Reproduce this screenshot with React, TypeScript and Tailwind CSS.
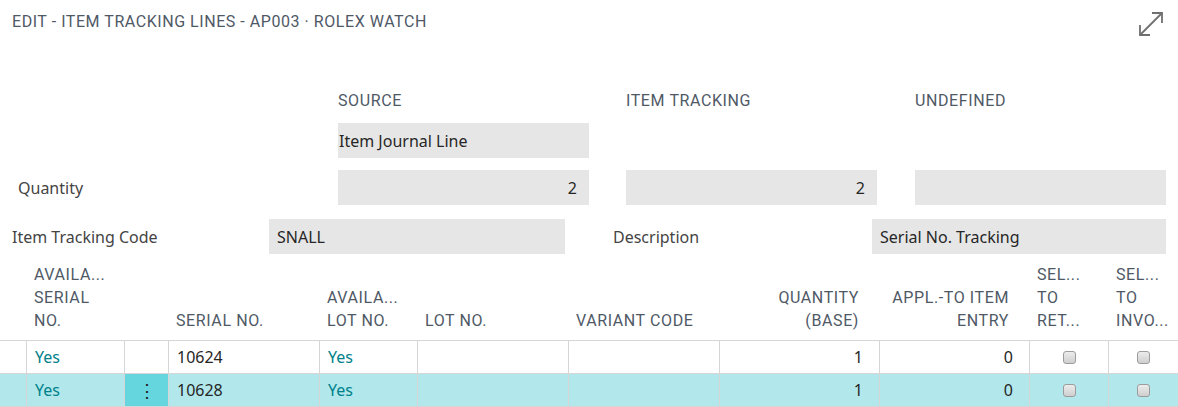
import React from 'react';

const cols = '26px 98px 44px 151px 98px 151px 151px 160px 150px 79px 70px';

const ExpandIcon = () => (
  <svg width="30" height="30" viewBox="0 0 30 30" fill="none" stroke="#6f6f6f" strokeWidth="1.8">
    <path d="M4 26 L26 4" />
    <path d="M16 4 H26 V14" />
    <path d="M4 16 V26 H14" />
  </svg>
);

const Checkbox = () => (
  <span className="inline-block w-[13px] h-[13px] rounded-[3px] border border-[#9c9c9c] bg-gradient-to-b from-[#ececec] to-[#cfcfcf]" />
);

const Field = ({ value, right, className }: { value?: string; right?: boolean; className: string }) => (
  <div
    className={`h-[35px] bg-[#e6e6e6] flex items-center text-[16px] text-[#262626] ${right ? 'justify-end pr-3' : 'px-2'} ${className}`}
  >
    {value}
  </div>
);

const HeaderCell = ({ lines, right }: { lines: string[]; right?: boolean }) => (
  <div className={`flex flex-col justify-end pb-[8px] px-2 leading-[23px] ${right ? 'items-end pr-[20px]' : ''}`}>
    {lines.map((l) => (
      <span key={l} className="whitespace-nowrap">
        {l}
      </span>
    ))}
  </div>
);

type Row = { serial: string; selected?: boolean };
const rows: Row[] = [{ serial: '10624' }, { serial: '10628', selected: true }];

export default function App() {
  return (
    <div className="w-[1178px] h-[407px] bg-white overflow-hidden font-['Noto_Sans',sans-serif] text-[15px]">
      {/* title bar */}
      <div className="h-[43px] flex items-center justify-between pl-3 pr-[12px] pt-[1px]">
        <h1 className="font-['Roboto',sans-serif] text-[16px] text-[#4f5966] tracking-[0.55px]">
          EDIT - ITEM TRACKING LINES - AP003 · ROLEX WATCH
        </h1>
        <div className="mt-[4px]">
          <ExpandIcon />
        </div>
      </div>

      {/* form */}
      <div className="mt-[48px] flex font-['Roboto',sans-serif] text-[16px] tracking-[0.6px] text-[#4f5966] h-[20px] items-center">
        <span className="ml-[338px] w-[288px]">SOURCE</span>
        <span className="w-[289px]">ITEM TRACKING</span>
        <span>UNDEFINED</span>
      </div>
      <div className="mt-[12px] flex">
        <Field value="Item Journal Line" className="ml-[338px] w-[251px] !pl-[1px]" />
      </div>
      <div className="mt-[12px] flex items-center">
        <span className="w-[338px] pl-[18px] text-[#444] text-[16px]">Quantity</span>
        <Field value="2" right className="w-[251px]" />
        <Field value="2" right className="ml-[37px] w-[251px]" />
        <Field className="ml-[38px] w-[251px]" />
      </div>
      <div className="mt-[14px] flex items-center">
        <span className="w-[269px] pl-3 text-[#444] text-[16px]">Item Tracking Code</span>
        <Field value="SNALL" className="w-[296px]" />
        <span className="ml-[48px] w-[259px] text-[#444] text-[16px]">Description</span>
        <Field value="Serial No. Tracking" className="w-[294px]" />
      </div>

      {/* table */}
      <div className="mt-[9px]">
        <div
          className="grid h-[78px] border-b border-[#d6d6d6] font-['Roboto',sans-serif] text-[16px] tracking-[0.6px] text-[#4f5966]"
          style={{ gridTemplateColumns: cols }}
        >
          <div />
          <HeaderCell lines={['AVAILA...', 'SERIAL', 'NO.']} />
          <div />
          <HeaderCell lines={['SERIAL NO.']} />
          <HeaderCell lines={['AVAILA...', 'LOT NO.']} />
          <HeaderCell lines={['LOT NO.']} />
          <HeaderCell lines={['VARIANT CODE']} />
          <HeaderCell lines={['QUANTITY', '(BASE)']} right />
          <HeaderCell lines={['APPL.-TO ITEM', 'ENTRY']} right />
          <HeaderCell lines={['SEL...', 'TO', 'RET...']} />
          <HeaderCell lines={['SEL...', 'TO', 'INVO...']} />
        </div>
        {rows.map((r) => (
          <div
            key={r.serial}
            className={`grid h-[33px] border-b border-[#d6d6d6] text-[16px] text-[#262626] ${r.selected ? 'bg-[#b2e8ec]' : ''}`}
            style={{ gridTemplateColumns: cols }}
          >
            <div />
            <div className="border-l border-[#d6d6d6] flex items-center px-2 text-[#00818a]">Yes</div>
            <div
              className={`border-l border-[#d6d6d6] flex items-center justify-center ${r.selected ? 'bg-[#65d5de] text-[#222] text-[18px]' : ''}`}
            >
              {r.selected ? '⋮' : ''}
            </div>
            <div className="border-l border-[#d6d6d6] flex items-center px-2">{r.serial}</div>
            <div className="border-l border-[#d6d6d6] flex items-center px-2 text-[#00818a]">Yes</div>
            <div className="border-l border-[#d6d6d6]" />
            <div className="border-l border-[#d6d6d6]" />
            <div className="border-l border-[#d6d6d6] flex items-center justify-end pr-4">1</div>
            <div className="border-l border-[#d6d6d6] flex items-center justify-end pr-4">0</div>
            <div className="border-l border-[#d6d6d6] flex items-center justify-center">
              <Checkbox />
            </div>
            <div className="border-l border-[#d6d6d6] flex items-center justify-center">
              <Checkbox />
            </div>
          </div>
        ))}
      </div>
    </div>
  );
}
